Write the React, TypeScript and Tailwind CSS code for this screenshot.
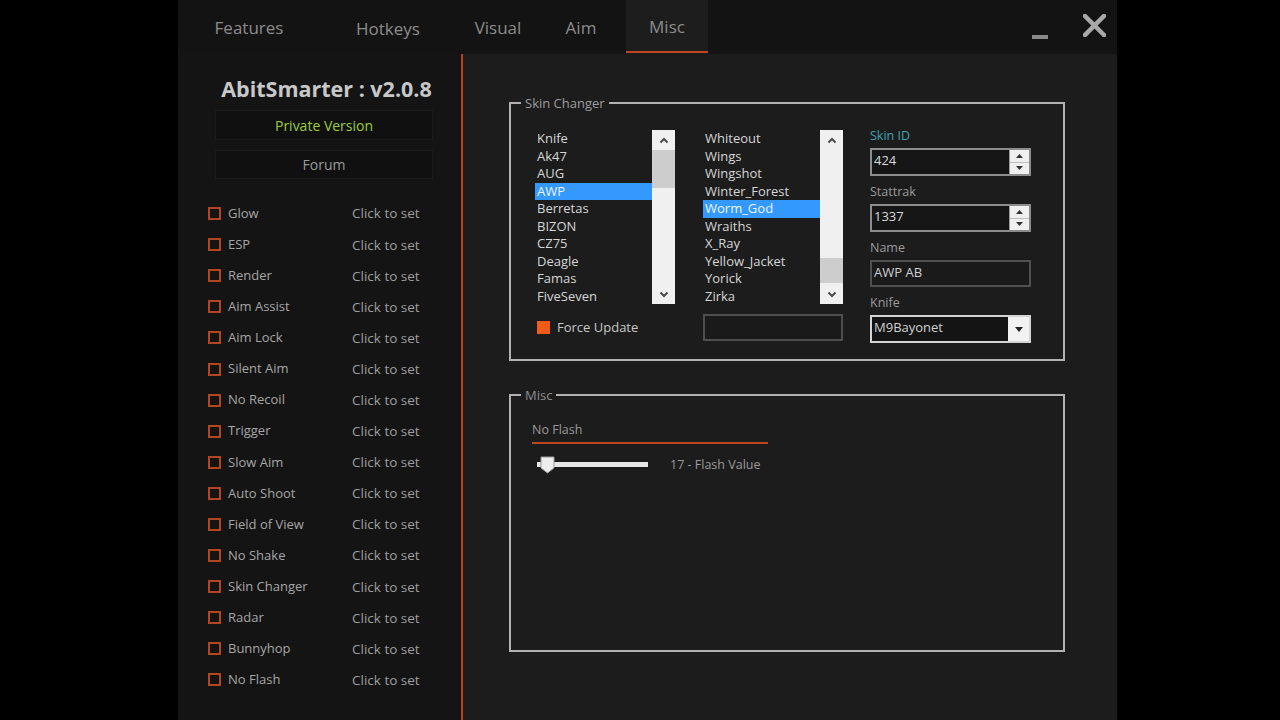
const features = [
  'Glow',
  'ESP',
  'Render',
  'Aim Assist',
  'Aim Lock',
  'Silent Aim',
  'No Recoil',
  'Trigger',
  'Slow Aim',
  'Auto Shoot',
  'Field of View',
  'No Shake',
  'Skin Changer',
  'Radar',
  'Bunnyhop',
  'No Flash',
];

const weapons = ['Knife', 'Ak47', 'AUG', 'AWP', 'Berretas', 'BIZON', 'CZ75', 'Deagle', 'Famas', 'FiveSeven'];
const skins = ['Whiteout', 'Wings', 'Wingshot', 'Winter_Forest', 'Worm_God', 'Wraiths', 'X_Ray', 'Yellow_Jacket', 'Yorick', 'Zirka'];

function Chevron({ down = false }: { down?: boolean }) {
  return (
    <svg width="10" height="7" viewBox="0 0 10 7" fill="none">
      <path
        d={down ? 'M1.5 1.5 L5 5 L8.5 1.5' : 'M1.5 5.5 L5 2 L8.5 5.5'}
        stroke="#4a4a4a"
        strokeWidth="2"
      />
    </svg>
  );
}

interface ListBoxProps {
  items: string[];
  selected: string;
  thumbOffset: number;
  thumbHeight: number;
}

function ListBox({ items, selected, thumbOffset, thumbHeight }: ListBoxProps) {
  return (
    <div className="flex h-[174px] w-[140px]">
      <div className="flex flex-1 flex-col">
        {items.map((item) => (
          <div
            key={item}
            className={
              item === selected
                ? 'h-[17.5px] bg-[#3399ff] pl-[2px] text-[13px] leading-[17.5px] text-[#eef5ff]'
                : 'h-[17.5px] pl-[2px] text-[13px] leading-[17.5px] text-[#d6d6d6]'
            }
          >
            {item}
          </div>
        ))}
      </div>
      <div className="flex w-[23px] flex-col bg-[#f0f0f0]">
        <div className="flex h-[20px] items-center justify-center">
          <Chevron />
        </div>
        <div className="flex-1">
          <div className="bg-[#cdcdcd]" style={{ marginTop: thumbOffset, height: thumbHeight }} />
        </div>
        <div className="flex h-[20px] items-center justify-center">
          <Chevron down />
        </div>
      </div>
    </div>
  );
}

function Spinner() {
  return (
    <div className="flex w-[20px] flex-col border-l border-[#9a9a9a] bg-[#f0f0f0]">
      <div className="flex flex-1 items-center justify-center border-b border-[#bdbdbd]">
        <svg width="7" height="4" viewBox="0 0 7 4">
          <path d="M0 4 L3.5 0 L7 4 Z" fill="#333" />
        </svg>
      </div>
      <div className="flex flex-1 items-center justify-center">
        <svg width="7" height="4" viewBox="0 0 7 4">
          <path d="M0 0 L3.5 4 L7 0 Z" fill="#333" />
        </svg>
      </div>
    </div>
  );
}

function Field({ label, first = false, children }: { label: string; first?: boolean; children: React.ReactNode }) {
  return (
    <div className={first ? '' : 'mt-[7px]'}>
      <div className={first ? 'text-[12.5px] leading-[18px] text-[#3ea3b3]' : 'text-[12.5px] leading-[18px] text-[#9a9a9a]'}>
        {label}
      </div>
      <div className="mt-[3px]">{children}</div>
    </div>
  );
}

export default function App() {
  return (
    <div className="flex h-[720px] w-full bg-black pl-[178px] font-['Open_Sans',sans-serif]">
      <div className="flex h-[720px] w-[939px] flex-col bg-[#141414]">
        {/* tab bar */}
        <div className="flex h-[54px] shrink-0 bg-[#131313]">
          <div className="ml-[31px] flex h-[54px] w-[80px] items-center justify-center pt-[2px] text-[17px] text-[#8c8c8c]">Features</div>
          <div className="ml-[59px] flex h-[54px] w-[80px] items-center justify-center pt-[4px] text-[17px] text-[#8c8c8c]">Hotkeys</div>
          <div className="ml-[30px] flex h-[54px] w-[80px] items-center justify-center pt-[2px] text-[17px] text-[#8c8c8c]">Visual</div>
          <div className="ml-[3px] flex h-[54px] w-[80px] items-center justify-center pt-[2px] text-[17px] text-[#8c8c8c]">Aim</div>
          <div className="ml-[5px] flex h-[54px] w-[82px] flex-col bg-[#1d1d1d]">
            <div className="flex flex-1 items-center justify-center pt-[2px] text-[17px] text-[#8c8c8c]">Misc</div>
            <div className="mb-[1px] h-[2px] bg-[#c0461f]" />
          </div>
          <div className="ml-auto mr-[11px] flex items-start">
            <div className="mt-[35px] h-[4px] w-[16px] bg-[#8a8a8a]" />
            <svg className="ml-[35px] mt-[14px]" width="23" height="23" viewBox="0 0 23 23">
              <path d="M2 2 L21 21 M21 2 L2 21" stroke="#a9a9a9" strokeWidth="4.5" strokeLinecap="square" />
            </svg>
          </div>
        </div>

        <div className="flex flex-1">
          {/* left panel */}
          <aside className="w-[283px] bg-[#141414] pt-[22px]">
            <div className="ml-[37px] w-[218px]">
              <div className="whitespace-nowrap pl-[5px] text-center text-[21.5px] font-bold leading-[26px] text-[#c8c8c8]">
                AbitSmarter : v2.0.8
              </div>
              <div className="mt-[8px] flex h-[30px] items-center justify-center border border-[#1b1b1b] bg-[#101010] text-[14px] text-[#9ccc3c]">
                Private Version
              </div>
              <div className="mt-[10px] flex h-[29px] items-center justify-center border border-[#1b1b1b] bg-[#101010] text-[14px] text-[#9a9a9a]">
                Forum
              </div>
            </div>
            <div className="mt-[19px]">
              {features.map((f) => (
                <div key={f} className="flex h-[31.1px] items-center pl-[30px] text-[13px]">
                  <div className="h-[13px] w-[13px] border-2 border-[#b4461f]" />
                  <div className="ml-[7px] w-[124px] text-[#a6a6a6]">{f}</div>
                  <div className="text-[13.5px] text-[#9e9e9e]">Click to set</div>
                </div>
              ))}
            </div>
          </aside>

          <div className="w-[2px] bg-[#b9401c]" />

          {/* right panel */}
          <main className="flex-1 bg-[#1c1c1c] pl-[46px] pt-[40px]">
            <fieldset className="h-[267px] w-[556px] border-2 border-[#b2b2b2] p-0">
              <legend className="ml-[10px] px-[4px] text-[13px] leading-[18px] text-[#9c9c9c]">Skin Changer</legend>
              <div className="flex pl-[24px] pt-[15px]">
                <div className="mt-[3px]">
                  <ListBox items={weapons} selected="AWP" thumbOffset={0} thumbHeight={38} />
                  <div className="mt-[17px] flex items-center pl-[2px]">
                    <div className="h-[13px] w-[13px] bg-[#f25a18]" />
                    <div className="ml-[7px] text-[13px] leading-[13px] text-[#c8c8c8]">Force Update</div>
                  </div>
                </div>
                <div className="ml-[28px] mt-[3px]">
                  <ListBox items={skins} selected="Worm_God" thumbOffset={108} thumbHeight={25} />
                  <div className="mt-[10px] h-[27px] w-[140px] border-2 border-[#4e4e4e] bg-[#1a1a1a]" />
                </div>
                <div className="ml-[27px] w-[161px]">
                  <Field label="Skin ID" first>
                    <div className="flex h-[28px] border-2 border-[#8c8c8c] bg-[#161616]">
                      <div className="flex-1 pl-[2px] text-[13px] leading-[21px] text-[#d8d8d8]">424</div>
                      <Spinner />
                    </div>
                  </Field>
                  <Field label="Stattrak">
                    <div className="flex h-[28px] border-2 border-[#8c8c8c] bg-[#161616]">
                      <div className="flex-1 pl-[2px] text-[13px] leading-[21px] text-[#d8d8d8]">1337</div>
                      <Spinner />
                    </div>
                  </Field>
                  <Field label="Name">
                    <div className="h-[27px] border-2 border-[#505050] bg-[#1a1a1a] pl-[2px] text-[13px] leading-[20px] text-[#cfcfcf]">
                      AWP AB
                    </div>
                  </Field>
                  <Field label="Knife">
                    <div className="flex h-[28px] border-2 border-[#d4d4d4] bg-[#141414]">
                      <div className="flex-1 pl-[2px] text-[13px] leading-[21px] text-[#d0d0d0]">M9Bayonet</div>
                      <div className="flex w-[21px] items-center justify-center bg-[#f2f2f2]">
                        <svg width="8" height="5" viewBox="0 0 8 5">
                          <path d="M0 0 L4 5 L8 0 Z" fill="#222" />
                        </svg>
                      </div>
                    </div>
                  </Field>
                </div>
              </div>
            </fieldset>

            <fieldset className="mt-[25px] h-[266px] w-[556px] border-2 border-[#b2b2b2] p-0">
              <legend className="ml-[10px] px-[4px] text-[13px] leading-[18px] text-[#8e8e8e]">Misc</legend>
              <div className="pl-[21px] pt-[17px]">
                <div className="text-[12.5px] leading-[18px] text-[#9a9a9a]">No Flash</div>
                <div className="mt-[3px] h-[2px] w-[236px] bg-[#c0461f]" />
                <div className="mt-[12px] flex items-center">
                  <div className="relative ml-[5px] h-[18px] w-[111px]">
                    <div className="mt-[6px] h-[5px] w-[111px] bg-[#e6e6e6]" />
                    <svg className="absolute left-[3px] top-0" width="15" height="18" viewBox="0 0 15 18">
                      <path d="M1 1 H14 V12 L7.5 17 L1 12 Z" fill="#ededed" stroke="#9a9a9a" strokeWidth="1" />
                    </svg>
                  </div>
                  <div className="ml-[22px] text-[12.5px] text-[#9a9a9a]">17 - Flash Value</div>
                </div>
              </div>
            </fieldset>
          </main>
        </div>
      </div>
    </div>
  );
}
